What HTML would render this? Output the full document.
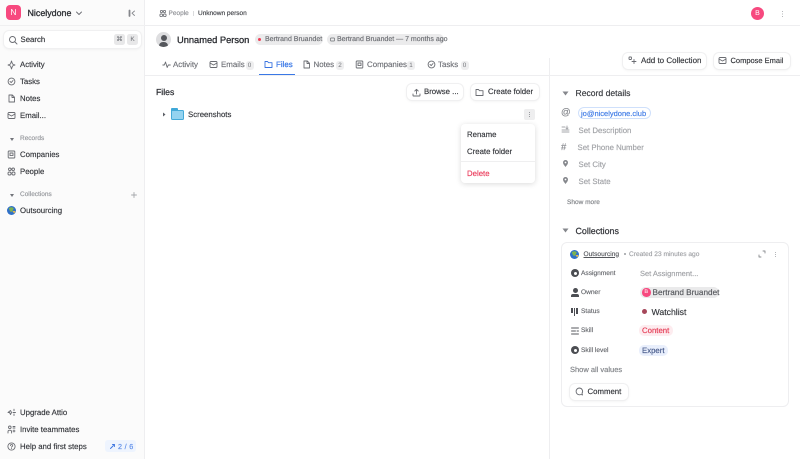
<!DOCTYPE html>
<html><head><meta charset="utf-8"><style>
*{box-sizing:border-box}
html,body{margin:0;padding:0;width:800px;height:459px;overflow:hidden;background:#fff}
body{font-family:"Liberation Sans",sans-serif;color:#2b2d33;font-size:7.8px;position:relative;text-rendering:geometricPrecision;-webkit-font-smoothing:antialiased;filter:blur(.3px)}
.t{position:absolute;white-space:nowrap;line-height:12px;-webkit-text-stroke:.15px;margin-top:.5px}
.a{position:absolute}
svg{position:absolute;fill:none;stroke:#6a6c72;stroke-width:.9;stroke-linecap:round;stroke-linejoin:round}
.btn{position:absolute;background:#fff;border-radius:5px;box-shadow:0 0 0 1px #f0f0f1,0 1px 3px rgba(0,0,0,.08)}
.pill{position:absolute;background:#ebebec;border-radius:6px}
.side{font-size:7.8px;color:#33353a}
.g{color:#a0a2a6}
.cnt{position:absolute;background:#eeeeef;border-radius:3px;font-size:6.3px;line-height:9px;height:9px;width:8px;text-align:center;color:#75777c}
.tab{color:#6d6f75;font-size:7.9px}
</style></head><body>
<!-- sidebar -->
<div class="a" style="left:0;top:0;width:145px;height:459px;background:#fbfbfb;border-right:1px solid #eeeef0"></div>
<div class="a" style="left:0;top:25px;width:145px;height:1px;background:#f0f0f1"></div>
<div class="a" style="left:6px;top:5px;width:15px;height:15px;border-radius:4px;background:#f7497f;color:#fff;font-size:8.500px;line-height:15px;text-align:center">N</div>
<div class="t" style="left:27.500px;top:6.500px;font-size:8.900px;color:#2c2e33;-webkit-text-stroke:.3px">Nicelydone</div>
<svg style="left:75px;top:9px" width="8" height="8" viewBox="0 0 8 8"><path d="M1.500 3l2.500 2.500L6.500 3"/></svg>
<svg style="left:128px;top:8.500px" width="8" height="9" viewBox="0 0 8 9"><path d="M1.500 1.500v5.500" stroke-width="1.800" stroke="#85878c"/><path d="M6.500 2L4 4.200l2.500 2.300" stroke="#85878c"/></svg>
<div class="btn" style="left:4px;top:31px;width:137px;height:17px"></div>
<svg style="left:8px;top:34.500px" width="10" height="10" viewBox="0 0 10 10"><circle cx="4.500" cy="4.500" r="3"/><path d="M7 7l2 2"/></svg>
<div class="t side" style="left:20.500px;top:33px">Search</div>
<div class="a" style="left:114px;top:34px;width:11px;height:11px;background:#e8e8e9;border-radius:2.500px;font-size:6.500px;line-height:11px;text-align:center;color:#6a6c72;font-family:'DejaVu Sans',sans-serif">⌘</div>
<div class="a" style="left:127px;top:34px;width:11px;height:11px;background:#e8e8e9;border-radius:2.500px;font-size:6.500px;line-height:11px;text-align:center;color:#6a6c72">K</div>

<svg style="left:7px;top:60px" width="9" height="10" viewBox="0 0 9 10"><path d="M4.500 1L5.500 4 8 5 5.500 6 4.500 9 3.500 6 1 5 3.500 4z"/></svg>
<div class="t side" style="left:20px;top:58.500px">Activity</div>
<svg style="left:7px;top:77px" width="9" height="9" viewBox="0 0 9 9"><circle cx="4.500" cy="4.500" r="3.400"/><path d="M3 4.500l1.200 1.100L6 3.500"/></svg>
<div class="t side" style="left:20px;top:75.500px">Tasks</div>
<svg style="left:7px;top:94px" width="9" height="9" viewBox="0 0 9 9"><path d="M2 1h3.300L7.500 3.200V8H2zM5 1v2.500h2.500"/></svg>
<div class="t side" style="left:20px;top:92.500px">Notes</div>
<svg style="left:7px;top:111px" width="9" height="9" viewBox="0 0 9 9"><rect x="1" y="1.500" width="7" height="6" rx="1"/><path d="M1 3l3.500 2L8 3"/></svg>
<div class="t side" style="left:20px;top:109.500px">Email...</div>

<svg style="left:9px;top:136.500px" width="6" height="5" viewBox="0 0 6 5"><path d="M1 1h4L3 4z" fill="#72747a" stroke="none"/></svg>
<div class="t g" style="left:20px;top:132.500px;font-size:6.500px;color:#94969b">Records</div>
<svg style="left:7px;top:150px" width="9" height="9" viewBox="0 0 9 9"><rect x="1.200" y="1" width="6.600" height="7" rx=".8"/><rect x="3" y="3" width="3" height="2.600"/></svg>
<div class="t side" style="left:20px;top:148.500px">Companies</div>
<svg style="left:7px;top:167px" width="9" height="9" viewBox="0 0 9 9"><circle cx="2.800" cy="2.300" r="1.300"/><circle cx="6.200" cy="2.300" r="1.300"/><rect x="1" y="5" width="3" height="3" rx="1.300"/><rect x="5" y="5" width="3" height="3" rx="1.300"/></svg>
<div class="t side" style="left:20px;top:165.500px">People</div>

<svg style="left:9px;top:192.500px" width="6" height="5" viewBox="0 0 6 5"><path d="M1 1h4L3 4z" fill="#72747a" stroke="none"/></svg>
<div class="t g" style="left:20px;top:188.500px;font-size:6.500px;color:#94969b">Collections</div>
<svg style="left:130px;top:191px" width="8" height="8" viewBox="0 0 8 8"><path d="M4 1.500v5M1.500 4h5" stroke="#a5a7ab"/></svg>
<svg style="left:7.300px;top:206px" width="9" height="9" viewBox="0 0 10 10"><circle cx="5" cy="5" r="5" fill="#2f70c8" stroke="none"/><path d="M2 2.500c1.500-1.500 4-1.500 5.500 0L6.500 5 4.500 7 3 5z" fill="#7db350" stroke="none"/><path d="M6 5.500l3.500 0-1.500 3z" fill="#e6b84a" stroke="none"/></svg>
<div class="t side" style="left:20px;top:204.500px">Outsourcing</div>

<svg style="left:7px;top:408px" width="10" height="9" viewBox="0 0 10 9"><path d="M3.500 2.500L4.500 4.500 3.500 6.500 2.500 4.500 1 4.500zM7 1.200v1.500M7 6v1.500M6 4.500h2.500"/></svg>
<div class="t side" style="left:20px;top:406px">Upgrade Attio</div>
<svg style="left:7px;top:425px" width="9" height="9" viewBox="0 0 9 9"><circle cx="2.800" cy="2.300" r="1.300"/><path d="M6 1.500h2M6 3h2M1 8V6.500c0-.8.800-1.300 1.800-1.300s1.800.5 1.800 1.300V8M6 6h2M7 5v2"/></svg>
<div class="t side" style="left:20px;top:423px">Invite teammates</div>
<svg style="left:7px;top:442px" width="9" height="9" viewBox="0 0 9 9"><circle cx="4.500" cy="4.500" r="3.600"/><path d="M3.400 3.600c0-1.400 2.300-1.400 2.300 0 0 .9-1.200.9-1.200 1.700M4.500 6.500v.1"/></svg>
<div class="t side" style="left:20px;top:440px">Help and first steps</div>
<div class="a" style="left:105px;top:440px;width:31px;height:12px;background:#eef4fe;border-radius:3px"></div>
<svg style="left:109px;top:442.500px" width="7" height="7" viewBox="0 0 7 7"><path d="M1.500 5.500l3-3M3.500 1.500h2V3.500" stroke="#3a74e0"/></svg>
<div class="t" style="left:118px;top:440px;font-size:7.200px;color:#5a8be8;letter-spacing:.3px">2 / 6</div>

<!-- top bar -->
<div class="a" style="left:145px;top:25px;width:655px;height:1px;background:#eeeef0"></div>
<svg style="left:159px;top:9px" width="8" height="9" viewBox="0 0 9 9"><circle cx="2.800" cy="2.300" r="1.300"/><circle cx="6.200" cy="2.300" r="1.300"/><rect x="1" y="5" width="3" height="3" rx="1.300"/><rect x="5" y="5" width="3" height="3" rx="1.300"/></svg>
<div class="t" style="left:168.500px;top:7.500px;font-size:6.500px;color:#8b8d92">People</div>
<div class="a" style="left:193px;top:10.500px;width:1px;height:5px;background:#dadbdd"></div>
<div class="t" style="left:198px;top:7.500px;font-size:6.500px;color:#3d3f44">Unknown person</div>
<div class="a" style="left:751px;top:7px;width:13px;height:13px;border-radius:50%;background:#f7497f;color:#fff;font-size:7px;line-height:13px;text-align:center">B</div>
<div class="a" style="left:781.500px;top:10.500px;width:1.500px;height:1.500px;background:#b5b7ba;box-shadow:0 2.500px #b5b7ba,0 5px #b5b7ba"></div>

<!-- header -->
<div class="a" style="left:156px;top:32px;width:15px;height:15px;border-radius:50%;background:#dedee0;overflow:hidden">
<div class="a" style="left:4.500px;top:3px;width:6px;height:6px;border-radius:50%;background:#55575c"></div>
<div class="a" style="left:3px;top:9.500px;width:9px;height:8px;border-radius:4px;background:#55575c"></div></div>
<div class="t" style="left:177px;top:33px;font-size:9.300px;color:#2a2c31;-webkit-text-stroke:.3px">Unnamed Person</div>
<div class="pill" style="left:254.500px;top:34px;width:68.500px;height:11px"></div>
<div class="a" style="left:257.500px;top:38px;width:3px;height:3px;border-radius:50%;background:#ef3e55"></div>
<div class="t" style="left:265px;top:33.500px;font-size:7px;color:#6b6d72">Bertrand Bruandet</div>
<div class="pill" style="left:326.500px;top:34px;width:117.500px;height:11px"></div>
<svg style="left:330px;top:37px" width="5" height="5" viewBox="0 0 5 5"><rect x=".5" y="1" width="4" height="3" rx=".5" stroke-width=".7" stroke="#6b6d72"/></svg>
<div class="t" style="left:337px;top:33.500px;font-size:7px;color:#6b6d72">Bertrand Bruandet — 7 months ago</div>

<!-- tabs -->
<svg style="left:162px;top:60px" width="9" height="9" viewBox="0 0 9 9"><path d="M.8 5h1.500l1.200-3 1.700 5.500L6.300 5h2"/></svg>
<div class="t tab" style="left:173px;top:58.500px">Activity</div>
<svg style="left:209px;top:60px" width="9" height="9" viewBox="0 0 9 9"><rect x="1" y="1.500" width="7" height="6" rx="1"/><path d="M1 3l3.500 2L8 3"/></svg>
<div class="t tab" style="left:221px;top:58.500px">Emails</div>
<div class="cnt" style="left:245.500px;top:60.500px">0</div>
<svg style="left:264px;top:60px" width="9" height="9" viewBox="0 0 9 9"><path d="M1 7.500V1.500h2.500L4.500 2.700H8v4.800z" stroke="#3a74e0"/></svg>
<div class="t tab" style="left:276px;top:58.500px;color:#3a78e6;-webkit-text-stroke:.25px">Files</div>
<div class="a" style="left:259px;top:73.500px;width:36px;height:1.500px;background:#3a78e6"></div>
<svg style="left:302px;top:60px" width="9" height="9" viewBox="0 0 9 9"><path d="M2 1h3.300L7.500 3.200V8H2zM5 1v2.500h2.500"/></svg>
<div class="t tab" style="left:313.500px;top:58.500px">Notes</div>
<div class="cnt" style="left:336px;top:60.500px">2</div>
<svg style="left:355px;top:60px" width="9" height="9" viewBox="0 0 9 9"><rect x="1.200" y="1" width="6.600" height="7" rx=".8"/><rect x="3" y="3" width="3" height="2.600"/></svg>
<div class="t tab" style="left:367px;top:58.500px">Companies</div>
<div class="cnt" style="left:407px;top:60.500px">1</div>
<svg style="left:426.500px;top:60px" width="9" height="9" viewBox="0 0 9 9"><circle cx="4.500" cy="4.500" r="3.400"/><path d="M3 4.500l1.200 1.100L6 3.500"/></svg>
<div class="t tab" style="left:438px;top:58.500px">Tasks</div>
<div class="cnt" style="left:460.500px;top:60.500px">0</div>
<div class="a" style="left:145px;top:74.500px;width:655px;height:1px;background:#eeeef0"></div>
<div class="a" style="left:549px;top:58px;width:1px;height:401px;background:#eeeef0"></div>

<!-- files -->
<div class="t" style="left:156px;top:85px;font-size:8.700px;color:#2f3136;-webkit-text-stroke:.25px">Files</div>
<div class="btn" style="left:407px;top:84px;width:56px;height:16px"></div>
<svg style="left:411.500px;top:87.500px" width="9" height="9" viewBox="0 0 9 9"><path d="M4.500 6V1.500M2.800 3l1.700-1.700L6.200 3M1 6v1.500c0 .3.200.5.500.5h6c.3 0 .5-.2.500-.5V6"/></svg>
<div class="t" style="left:424px;top:85px;color:#33353a">Browse ...</div>
<div class="btn" style="left:470.500px;top:84px;width:68px;height:16px"></div>
<svg style="left:475px;top:87.500px" width="9" height="9" viewBox="0 0 9 9"><path d="M1 7.500V1.500h2.500L4.500 2.700H8v4.800z"/></svg>
<div class="t" style="left:488px;top:85px;color:#33353a">Create folder</div>
<svg style="left:161.500px;top:112px" width="4" height="5" viewBox="0 0 4 5"><path d="M1 .5L3.500 2.500 1 4.500z" fill="#5c5f66" stroke="none"/></svg>
<div class="a" style="left:171px;top:108px;width:7px;height:3px;background:#3fa8d8;border-radius:1px 1px 0 0"></div>
<div class="a" style="left:171px;top:109.500px;width:13px;height:10px;background:#94d3f0;border:1px solid #45aad8;border-radius:1.500px"></div>
<div class="t" style="left:188px;top:108px;color:#33353a">Screenshots</div>
<div class="a" style="left:524px;top:109px;width:11px;height:10.500px;background:#eeeeef;border-radius:2px"></div>
<div class="a" style="left:529px;top:112px;width:1px;height:1px;background:#9a9ca0;box-shadow:0 2px #9a9ca0,0 4px #9a9ca0"></div>

<!-- menu -->
<div class="a" style="left:461px;top:124px;width:74px;height:59px;background:#fff;border-radius:4px;box-shadow:0 1px 6px rgba(0,0,0,.15)"></div>
<div class="t" style="left:467px;top:128px;color:#33353a">Rename</div>
<div class="t" style="left:467px;top:145px;color:#33353a">Create folder</div>
<div class="a" style="left:461px;top:161px;width:74px;height:1px;background:#efeff0"></div>
<div class="t" style="left:467px;top:167px;color:#ea3a5a">Delete</div>

<!-- right actions -->
<div class="btn" style="left:623px;top:52.500px;width:83px;height:16px"></div>
<svg style="left:628px;top:56px" width="9" height="9" viewBox="0 0 9 9"><rect x="1" y="1" width="2.500" height="2.500" rx=".6"/><path d="M6 3.500v4M4 5.500h4"/></svg>
<div class="t" style="left:641px;top:54px;color:#33353a;font-size:8px">Add to Collection</div>
<div class="btn" style="left:713.500px;top:52.500px;width:76px;height:16px"></div>
<svg style="left:718px;top:56px" width="9" height="9" viewBox="0 0 9 9"><rect x="1" y="1.500" width="7" height="6" rx="1"/><path d="M1 3l3.500 2L8 3"/></svg>
<div class="t" style="left:730.500px;top:54px;color:#33353a;font-size:7.500px">Compose Email</div>

<!-- record details -->
<svg style="left:562px;top:90.500px" width="7" height="5" viewBox="0 0 7 5"><path d="M.5.500h6L3.500 4.500z" fill="#85878c" stroke="none"/></svg>
<div class="t" style="left:575.500px;top:86.500px;font-size:8.600px;color:#36383d;-webkit-text-stroke:.15px">Record details</div>
<div class="t" style="left:561px;top:106.500px;font-size:9.500px;color:#85878c">@</div>
<div class="a" style="left:577.500px;top:107px;width:73px;height:11.500px;border:1px solid #cfe0fb;border-radius:6px"></div>
<div class="t" style="left:581px;top:107px;color:#3a78e6;font-size:7.500px">jo@nicelydone.club</div>
<svg style="left:561px;top:125px" width="9" height="9" viewBox="0 0 9 9"><path d="M1 2h3M6 1v3M5 3l1 1 1-1M1 5h7M1 7h7" stroke="#a5a7ab"/></svg>
<div class="t g" style="left:578.500px;top:124.500px">Set Description</div>
<div class="t" style="left:561px;top:141px;font-size:9.500px;color:#85878c">#</div>
<div class="t g" style="left:577.500px;top:141px">Set Phone Number</div>
<svg style="left:561px;top:159px" width="9" height="9" viewBox="0 0 9 9"><path d="M4.500 8C3 6 2 5 2 3.500a2.500 2.500 0 015 0C7 5 6 6 4.500 8z" fill="#85878c" stroke="none"/><circle cx="4.500" cy="3.500" r=".9" fill="#fff" stroke="none"/></svg>
<div class="t g" style="left:578.500px;top:158px">Set City</div>
<svg style="left:561px;top:176px" width="9" height="9" viewBox="0 0 9 9"><path d="M4.500 8C3 6 2 5 2 3.500a2.500 2.500 0 015 0C7 5 6 6 4.500 8z" fill="#85878c" stroke="none"/><circle cx="4.500" cy="3.500" r=".9" fill="#fff" stroke="none"/></svg>
<div class="t g" style="left:578.500px;top:175px">Set State</div>
<div class="t" style="left:567px;top:196px;font-size:6.500px;color:#7e8085">Show more</div>

<!-- collections -->
<svg style="left:562px;top:227.500px" width="7" height="5" viewBox="0 0 7 5"><path d="M.5.500h6L3.500 4.500z" fill="#85878c" stroke="none"/></svg>
<div class="t" style="left:575.500px;top:224px;font-size:8.900px;color:#36383d;-webkit-text-stroke:.25px">Collections</div>
<div class="a" style="left:561px;top:242px;width:228px;height:164.500px;border:1px solid #eeeef0;border-radius:6px"></div>
<svg style="left:570px;top:249.500px" width="9" height="9" viewBox="0 0 10 10"><circle cx="5" cy="5" r="5" fill="#2f70c8" stroke="none"/><path d="M2 2.500c1.500-1.500 4-1.500 5.500 0L6.500 5 4.500 7 3 5z" fill="#7db350" stroke="none"/><path d="M6 5.500l3.500 0-1.500 3z" fill="#e6b84a" stroke="none"/></svg>
<div class="t" style="left:583.500px;top:248px;font-size:6.600px;color:#55575c;text-decoration:underline">Outsourcing</div>
<div class="a" style="left:623.500px;top:253px;width:2px;height:2px;border-radius:50%;background:#9a9ca0"></div>
<div class="t" style="left:629px;top:248px;font-size:6.600px;color:#a0a2a6">Created 23 minutes ago</div>
<svg style="left:758px;top:249.500px" width="8" height="8" viewBox="0 0 8 8"><path d="M5 1h2v2M3 7H1V5" stroke="#8a8c90"/></svg>
<div class="a" style="left:774.500px;top:252px;width:1px;height:1px;background:#b5b7ba;box-shadow:0 2px #b5b7ba,0 4px #b5b7ba"></div>

<div class="a" style="left:571px;top:269px;width:8px;height:8px;border-radius:50%;background:#4c4e53"></div>
<div class="a" style="left:573.500px;top:271.500px;width:3px;height:3px;border-radius:50%;background:#fff"></div>
<div class="t" style="left:581px;top:267px;font-size:6.600px;color:#66686d">Assignment</div>
<div class="t" style="left:640px;top:267px;color:#a0a2a6;font-size:7.500px">Set Assignment...</div>

<div class="a" style="left:572.500px;top:288px;width:5px;height:5px;border-radius:50%;background:#4c4e53"></div>
<div class="a" style="left:571px;top:293.500px;width:8px;height:3px;border-radius:2px 2px 0 0;background:#4c4e53"></div>
<div class="t" style="left:581px;top:286px;font-size:6.600px;color:#66686d">Owner</div>
<div class="a" style="left:640px;top:286.500px;width:79px;height:11.500px;background:#eaeaeb;border-radius:6px"></div>
<div class="a" style="left:642px;top:288px;width:8.500px;height:8.500px;border-radius:50%;background:#f7497f;color:#fff;font-size:5.500px;line-height:8.500px;text-align:center">B</div>
<div class="t" style="left:652.500px;top:286px;color:#55575c;font-size:8.200px">Bertrand Bruandet</div>

<div class="a" style="left:571px;top:308px;width:1.500px;height:5px;background:#4c4e53"></div>
<div class="a" style="left:573.500px;top:308px;width:1.500px;height:8px;background:#4c4e53"></div>
<div class="a" style="left:576px;top:308px;width:1.500px;height:6px;background:#4c4e53"></div>
<div class="t" style="left:581px;top:305px;font-size:6.600px;color:#66686d">Status</div>
<div class="a" style="left:642px;top:308.500px;width:5px;height:5px;border-radius:50%;background:#a6475a"></div>
<div class="t" style="left:651.500px;top:305px;color:#33353a;font-size:8.700px">Watchlist</div>

<svg style="left:571px;top:326.500px" width="8" height="8" viewBox="0 0 8 8"><path d="M.5 1h7M.5 4h4M6 4h1.500M.5 7h7" stroke="#55575c"/></svg>
<div class="t" style="left:581px;top:324px;font-size:6.600px;color:#66686d">Skill</div>
<div class="a" style="left:639px;top:324.500px;width:34px;height:11.500px;background:#fdecef;border-radius:5px"></div>
<div class="t" style="left:642px;top:324px;color:#e53a54">Content</div>

<div class="a" style="left:571px;top:346px;width:8px;height:8px;border-radius:50%;background:#4c4e53"></div>
<div class="a" style="left:573.500px;top:348.500px;width:3px;height:3px;border-radius:50%;background:#fff"></div>
<div class="t" style="left:581px;top:344px;font-size:6.600px;color:#66686d">Skill level</div>
<div class="a" style="left:639px;top:344.500px;width:29px;height:11.500px;background:#e9effc;border-radius:5px"></div>
<div class="t" style="left:642px;top:344px;color:#475a8a">Expert</div>

<div class="t" style="left:570px;top:363px;color:#7e8085;font-size:7.500px">Show all values</div>
<div class="btn" style="left:570px;top:383.500px;width:57.500px;height:16px"></div>
<svg style="left:575px;top:387px" width="9" height="9" viewBox="0 0 9 9"><path d="M4.500 1a3.400 3.400 0 100 6.800c.5 0 1-.1 1.500-.3L7.500 8 7 6.300A3.400 3.400 0 004.500 1z"/></svg>
<div class="t" style="left:587.500px;top:385.500px;color:#33353a">Comment</div>
</body></html>
